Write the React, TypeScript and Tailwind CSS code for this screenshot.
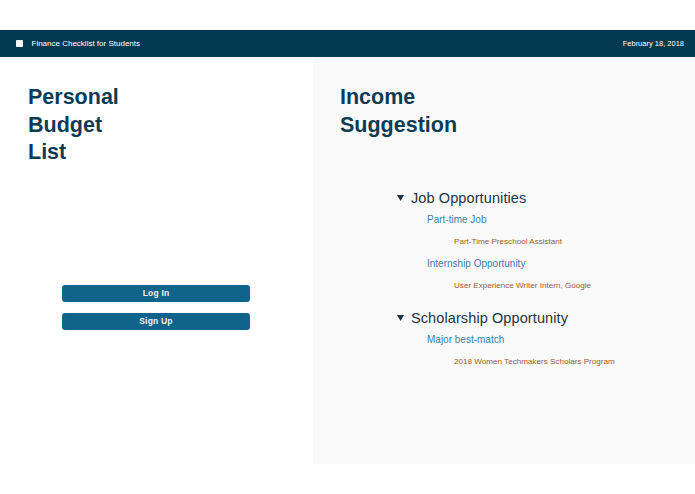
import React from "react";

const font = { fontFamily: '"Liberation Sans", Arial, sans-serif' };

type Group = { label: string; items: string[] };
type Section = { title: string; groups: Group[] };

const sections: Section[] = [
  {
    title: "Job Opportunities",
    groups: [
      { label: "Part-time Job", items: ["Part-Time Preschool Assistant"] },
      { label: "Internship Opportunity", items: ["User Experience Writer Intern, Google"] },
    ],
  },
  {
    title: "Scholarship Opportunity",
    groups: [{ label: "Major best-match", items: ["2018 Women Techmakers Scholars Program"] }],
  },
];

function Caret() {
  return (
    <svg width="7" height="6" viewBox="0 0 7 6" className="shrink-0">
      <path d="M0 0 H7 L3.5 6 Z" fill="#1d3444" />
    </svg>
  );
}

function Tree() {
  return (
    <div className="mt-[48px] pl-[84px]">
      {sections.map((s, i) => (
        <div key={s.title} className={i > 0 ? "mt-[10px]" : ""}>
          <div className="flex h-[22px] items-center gap-[7px]">
            <Caret />
            <span className="text-[14.5px] leading-[22px] tracking-[0.1px] text-[#1d3444]">{s.title}</span>
          </div>
          {s.groups.map((g) => (
            <div key={g.label}>
              <div className="pl-[30px] text-[10px] leading-[21px] text-[#3a80a6]">{g.label}</div>
              {g.items.map((it) => (
                <div key={it} className="pl-[57px] text-[8.1px] leading-[23px] text-[#a25a2c]">
                  {it}
                </div>
              ))}
            </div>
          ))}
        </div>
      ))}
    </div>
  );
}

export default function App() {
  return (
    <div style={font} className="w-[695px] bg-white">
      <div className="h-[30px]" />
      <header className="flex h-[27px] items-center justify-between bg-[#033a4f] pl-[16px] pr-[11px] text-white">
        <div className="flex items-center gap-[9px]">
          <span className="block h-[6.5px] w-[6.5px] rounded-[1px] bg-white" />
          <span className="text-[8px]">Finance Checklist for Students</span>
        </div>
        <span className="text-[7.5px]">February 18, 2018</span>
      </header>
      <div className="flex h-[407px]">
        <section className="w-[313px] pl-[28px] pt-[27px]">
          <h1 className="text-[21.5px] font-bold leading-[27.5px] text-[#0b3c54]">
            Personal
            <br />
            Budget
            <br />
            List
          </h1>
          <div className="mt-[118px] flex w-[188px] flex-col gap-[11px] pl-[34px] box-content">
            <button className="h-[17px] w-[188px] rounded-[3px] bg-[#10638a] text-[8.5px] font-bold tracking-[0.2px] text-[#eef3f6]">
              Log In
            </button>
            <button className="h-[17px] w-[188px] rounded-[3px] bg-[#10638a] text-[8.5px] font-bold tracking-[0.2px] text-[#eef3f6]">
              Sign Up
            </button>
          </div>
        </section>
        <section className="flex-1 bg-[#fafafa] pt-[27px]">
          <h2 className="pl-[27px] text-[21.5px] font-bold leading-[27.5px] text-[#0b3c54]">
            Income
            <br />
            Suggestion
          </h2>
          <Tree />
        </section>
      </div>
      <div className="h-[30px]" />
    </div>
  );
}
